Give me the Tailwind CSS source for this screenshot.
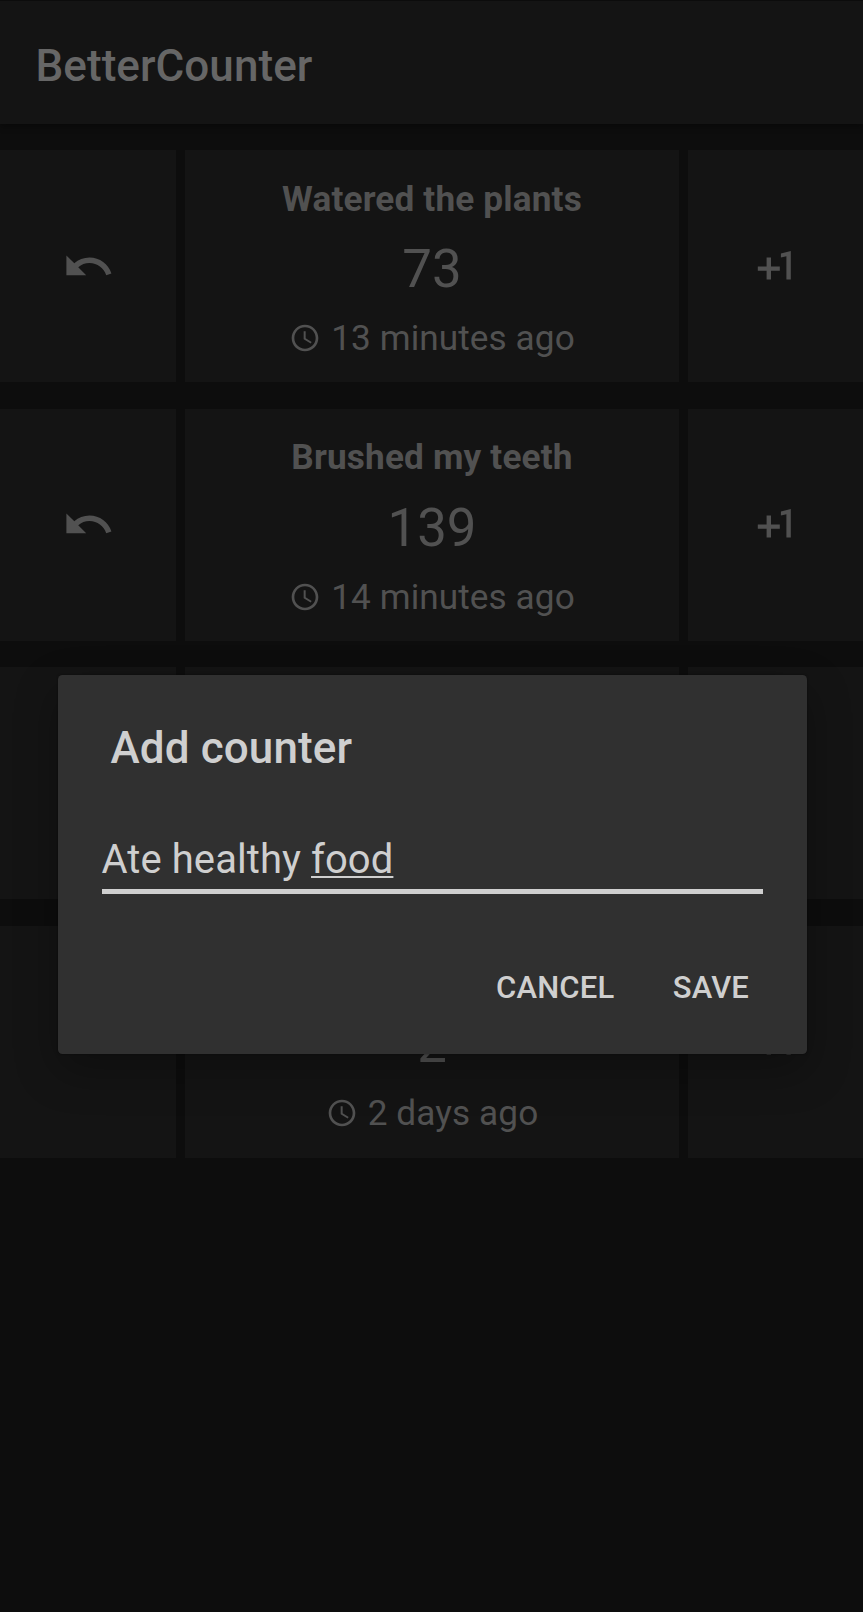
<!DOCTYPE html>
<html lang="en">
<head>
<meta charset="utf-8">
<title>BetterCounter</title>
<script src="https://cdn.jsdelivr.net/npm/@tailwindcss/browser@4"></script>
</head>
<body class="bg-[#0d0d0d] font-[Roboto,sans-serif]">
<svg class="hidden">
  <symbol id="undo" viewBox="0 0 24 24"><path fill="currentColor" d="M12.5,8c-2.65,0 -5.05,0.99 -6.9,2.6L2,7v9h9l-3.62,-3.62c1.39,-1.16 3.16,-1.88 5.12,-1.88 3.54,0 6.55,2.31 7.6,5.5l2.37,-0.78C21.08,11.03 17.15,8 12.5,8z"/></symbol>
  <symbol id="plus" viewBox="0 0 24 24"><path fill="currentColor" d="M10,8L8,8v4L4,12v2h4v4h2v-4h4v-2h-4zM14.5,6.08v1.82l2.5,-0.5L17,18h2L19,5z"/></symbol>
  <symbol id="clock" viewBox="0 0 24 24"><path fill="currentColor" d="M11.99,2C6.47,2 2,6.48 2,12s4.47,10 9.99,10C17.52,22 22,17.52 22,12S17.52,2 11.99,2zM12,20c-4.42,0 -8,-3.58 -8,-8s3.58,-8 8,-8 8,3.58 8,8 -3.58,8 -8,8zM12.5,7H11v6l5.25,3.15 0.75,-1.23 -4.5,-2.67z"/></symbol>
</svg>
<div class="relative w-[863px] h-[1612px] overflow-hidden bg-[#0d0d0d] pt-px">
  <header class="h-[123px] bg-[#141414] flex items-center pl-[35.5px] pt-[7px] shadow-[0_3px_6px_rgba(0,0,0,0.3)]">
    <h1 class="text-[44px] leading-[52px] font-medium tracking-[0.05px] text-[#666666]">BetterCounter</h1>
  </header>
  <main class="mt-[26px] flex flex-col gap-[26.5px] text-[#515151]">
    <section class="h-[232.1px] grid grid-cols-[176px_494px_175px] gap-[9px]">
      <button class="bg-[#141414] flex items-center justify-center"><svg class="size-[52.8px]"><use href="#undo"/></svg></button>
      <div class="bg-[#141414] flex flex-col items-center pt-[28px]">
        <h2 class="text-[35.2px] leading-[42px] font-bold tracking-[0.15px]">Watered the plants</h2>
        <p class="mt-[18px] text-[52.8px] leading-[62px]">73</p>
        <p class="mt-[17px] flex items-center gap-[10px] text-[35.2px] leading-[42px] tracking-[0.07px]"><svg class="size-[32px]"><use href="#clock"/></svg>13 minutes ago</p>
      </div>
      <button class="bg-[#141414] flex items-center justify-center"><svg class="size-[52.8px]"><use href="#plus"/></svg></button>
    </section>
    <section class="h-[232.1px] grid grid-cols-[176px_494px_175px] gap-[9px]">
      <button class="bg-[#141414] flex items-center justify-center"><svg class="size-[52.8px]"><use href="#undo"/></svg></button>
      <div class="bg-[#141414] flex flex-col items-center pt-[27px]">
        <h2 class="text-[35.2px] leading-[42px] font-bold tracking-[0.15px]">Brushed my teeth</h2>
        <p class="mt-[19px] text-[52.8px] leading-[62px]">139</p>
        <p class="mt-[17px] flex items-center gap-[10px] text-[35.2px] leading-[42px] tracking-[0.07px]"><svg class="size-[32px]"><use href="#clock"/></svg>14 minutes ago</p>
      </div>
      <button class="bg-[#141414] flex items-center justify-center"><svg class="size-[52.8px]"><use href="#plus"/></svg></button>
    </section>
    <section class="h-[232.1px] grid grid-cols-[176px_494px_175px] gap-[9px]">
      <div class="bg-[#141414]"></div><div class="bg-[#141414]"></div><div class="bg-[#141414]"></div>
    </section>
    <section class="h-[232.1px] grid grid-cols-[176px_494px_175px] gap-[9px]">
      <div class="bg-[#141414]"></div>
      <div class="bg-[#141414] flex flex-col items-center pt-[87.4px]">
        <p class="text-[52.8px] leading-[62px]">2</p>
        <p class="mt-[17px] flex items-center gap-[10px] text-[35.2px] leading-[42px] tracking-[0.1px]"><svg class="size-[32px]"><use href="#clock"/></svg>2 days ago</p>
      </div>
      <button class="bg-[#141414] flex items-center justify-center"><svg class="size-[52.8px]"><use href="#plus"/></svg></button>
    </section>
  </main>

  <div role="dialog" class="absolute left-[57.5px] top-[675px] w-[749px] h-[379.4px] rounded-[4.4px] bg-[#303030] text-[#cfcfcf] flex flex-col pl-[44px] pr-[44px] pt-[47px] shadow-[0_16px_44px_rgba(0,0,0,0.3),0_0_2px_rgba(0,0,0,0.5)]">
    <h2 class="pl-[9px] text-[44px] leading-[52px] font-medium tracking-[0.12px]">Add counter</h2>
    <div class="mt-[62px] h-[58px] border-b-[5px] border-[#cfcfcf] text-[40px] leading-[48px] tracking-[0.07px] whitespace-pre">Ate healthy <span class="underline decoration-[2px] underline-offset-[3px] [text-decoration-skip-ink:none]">food</span></div>
    <div class="mt-[76px] pr-[13.5px] flex justify-end gap-[58.5px] text-[31px] leading-[36px] font-medium tracking-[0.15px]">
      <button>CANCEL</button>
      <button>SAVE</button>
    </div>
  </div>
</div>
</body>
</html>
